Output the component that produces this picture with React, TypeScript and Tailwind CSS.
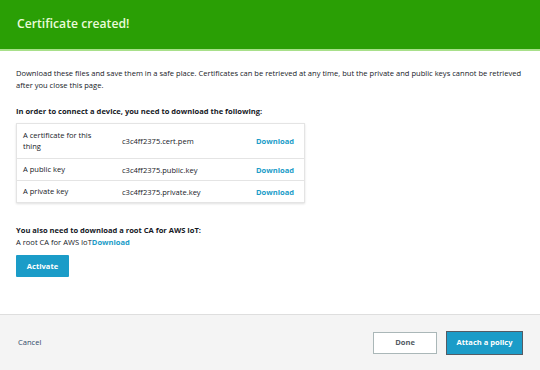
export default function App() {
  const rows = [
    { label: "A certificate for this thing", file: "c3c4ff2375.cert.pem", h: "h-[34px]" },
    { label: "A public key", file: "c3c4ff2375.public.key", h: "h-[22px]" },
    { label: "A private key", file: "c3c4ff2375.private.key", h: "h-[22px]" },
  ];
  return (
    <div className="w-[540px] h-[370px] bg-white flex flex-col text-[#16191f]" style={{ fontFamily: '"Open Sans", sans-serif' }}>
      <div className="h-[51px] bg-[#2a9f05] border-b-2 border-[#a8e08a] flex items-center px-[17px] shrink-0">
        <span className="text-[12.2px] font-semibold text-[#e9fbd9] leading-none">Certificate created!</span>
      </div>
      <div className="flex-1 px-4 pt-[16px] text-[7.55px] leading-[12px]">
        <p>Download these files and save them in a safe place. Certificates can be retrieved at any time, but the private and public keys cannot be retrieved after you close this page.</p>
        <p className="font-bold mt-[14px]">In order to connect a device, you need to download the following:</p>
        <div className="mt-[6px] w-[289px] border border-[#e4e4e4] shadow-[0_1px_2px_rgba(0,0,0,0.12)]">
          {rows.map((r, i) => (
            <div key={i} className={`flex items-center ${r.h} ${i > 0 ? "border-t border-[#e4e4e4]" : ""}`}>
              <div className="w-[105px] pl-[6px] pr-[26px] leading-[11px]">{r.label}</div>
              <div className="w-[134px]">{r.file}</div>
              <div className="font-bold text-[#1b9cc8]">Download</div>
            </div>
          ))}
        </div>
        <p className="font-bold mt-[21px]">You also need to download a root CA for AWS IoT:</p>
        <p>A root CA for AWS IoT<span className="font-bold text-[#1b9cc8]">Download</span></p>
        <button className="mt-[7px] w-[53px] h-[22px] bg-[#1b9cc8] text-white font-bold rounded-[1px]">Activate</button>
      </div>
      <div className="h-[56px] shrink-0 bg-[#f4f4f4] border-t border-[#dedede] flex items-center pl-[18px] pr-[17px] text-[7.55px]">
        <span className="text-[#2f4a6b]">Cancel</span>
        <div className="flex-1" />
        <button className="w-[64px] h-[22px] bg-white border border-[#aab7b8] text-[#545b64] font-bold mr-[9px]">Done</button>
        <button className="w-[77px] h-[24px] bg-[#1b9cc8] border border-[#545b64] text-white font-bold">Attach a policy</button>
      </div>
    </div>
  );
}
